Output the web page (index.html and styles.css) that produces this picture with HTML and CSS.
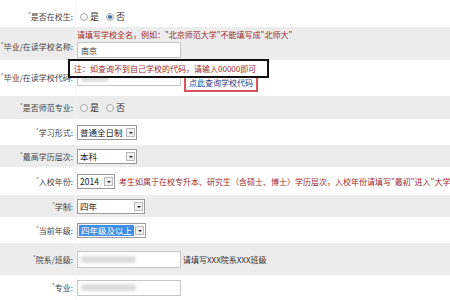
FILE: index.html
```html
<!DOCTYPE html>
<html lang="zh-CN">
<head>
    <meta charset="UTF-8">
    <title>学籍信息</title>
    <link rel="stylesheet" href="styles.css">
</head>
<body>
    <div class="form">
        <div class="row r1">
            <div class="label"><i>*</i>是否在校生:</div>
            <div class="field">
                <span class="radio"></span><span class="opt">是</span>
                <span class="radio on"></span><span class="opt">否</span>
            </div>
        </div>

        <div class="row gray r2">
            <div class="label"><i>*</i>毕业/在读学校名称:</div>
            <div class="field col">
                <div class="hint">请填写学校全名，例如："北京师范大学"不能填写成"北师大"</div>
                <div class="input wide">南京</div>
            </div>
        </div>

        <div class="row r3">
            <div class="label"><i>*</i>毕业/在读学校代码:</div>
            <div class="field">
                <div class="input"><span class="blur"></span></div>
                <a class="lookup">点此查询学校代码</a>
            </div>
            <div class="note">注：如查询不到自己学校的代码，请输入00000即可</div>
        </div>

        <div class="row gray r4">
            <div class="label"><i>*</i>是否师范专业:</div>
            <div class="field">
                <span class="radio"></span><span class="opt">是</span>
                <span class="radio"></span><span class="opt">否</span>
            </div>
        </div>

        <div class="row r5">
            <div class="label"><i>*</i>学习形式:</div>
            <div class="field">
                <div class="select s-form"><span>普通全日制</span><b></b></div>
            </div>
        </div>

        <div class="row gray r6">
            <div class="label"><i>*</i>最高学历层次:</div>
            <div class="field">
                <div class="select s-level"><span>本科</span><b></b></div>
            </div>
        </div>

        <div class="row r7">
            <div class="label"><i>*</i>入校年份:</div>
            <div class="field">
                <div class="select s-year"><span>2014</span><b></b></div>
                <span class="hint nowrap">考生如属于在校专升本、研究生（含硕士、博士）学历层次，入校年份请填写"最初"进入"大学"时的年份</span>
            </div>
        </div>

        <div class="row gray r8">
            <div class="label"><i>*</i>学制:</div>
            <div class="field">
                <div class="select s-len"><span>四年</span><b></b></div>
            </div>
        </div>

        <div class="row r9">
            <div class="label"><i>*</i>当前年级:</div>
            <div class="field">
                <div class="select s-grade"><span class="picked">四年级及以上</span><b></b></div>
            </div>
        </div>

        <div class="row gray r10">
            <div class="label"><i>*</i>院系/班级:</div>
            <div class="field">
                <div class="input tall"><span class="blur long"></span></div>
                <span class="tip">请填写XXX院系XXX班级</span>
            </div>
        </div>

        <div class="row r11">
            <div class="label"><i>*</i>专业:</div>
            <div class="field">
                <div class="input"><span class="blur long"></span></div>
            </div>
        </div>
    </div>
</body>
</html>
```

FILE: styles.css
```css
body {
    margin: 0;
    background: #fff;
    font-family: "Noto Sans CJK SC", "Liberation Sans", sans-serif;
    font-size: 8px;
    color: #333;
    overflow: hidden;
}

.form {
    width: 450px;
    overflow: hidden;
}

.row {
    display: flex;
    align-items: center;
    position: relative;
    background: #fff;
}

.row.gray {
    background: #ececec;
}

.r1 { height: 27px; }
.r2 { height: 33px; }
.r3 { height: 36px; }
.r4 { height: 23px; }
.r5 { height: 26px; }
.r6 { height: 22px; }
.r7 { height: 28px; }
.r8 { height: 22px; }
.r9 { height: 26px; }
.r10 { height: 32px; }
.r11 { height: 25px; }

.label {
    flex-shrink: 0;
    width: 73px;
    padding-right: 2px;
    text-align: right;
    white-space: nowrap;
    align-self: stretch;
    display: flex;
    align-items: center;
    justify-content: flex-end;
    border-right: 1px solid #f4f4f4;
    color: #444;
}

.r1 .label { padding-top: 6px; }
.r2 .label { padding-top: 5px; }
.r3 .label { padding-bottom: 2px; }

.label i {
    font-style: normal;
    font-size: 6px;
    color: #777;
    position: relative;
    top: -2px;
}

.field {
    display: flex;
    align-items: center;
    padding-left: 1px;
    white-space: nowrap;
    min-width: 0;
}

.r1 .field { padding-top: 6px; }

.field.col {
    flex-direction: column;
    align-items: flex-start;
    gap: 2px;
    padding-top: 0;
}

.hint {
    color: #a02a2a;
}

.nowrap {
    margin-left: 4px;
}

.radio {
    width: 6px;
    height: 6px;
    border: 1px solid #aaa;
    border-radius: 50%;
    background: #f4f4f4;
    margin: 0 2px 0 3px;
    position: relative;
}

.radio.on::after {
    content: "";
    position: absolute;
    left: 1px;
    top: 1px;
    width: 4px;
    height: 4px;
    border-radius: 50%;
    background: #3a6fb0;
}

.opt {
    margin-right: 4px;
    font-size: 9px;
    color: #333;
}

.input {
    width: 99px;
    height: 14px;
    border: 1px solid #c6c6c6;
    background: #fff;
    display: flex;
    align-items: center;
    padding-left: 3px;
    box-sizing: content-box;
    flex-shrink: 0;
}

.input.wide {
    width: 99px;
    color: #333;
}

.input.tall {
    height: 15px;
}

.blur {
    display: block;
    width: 28px;
    height: 7px;
    background: #dcdcdc;
    border-radius: 4px;
    filter: blur(1.5px);
}

.blur.long {
    width: 55px;
}

.lookup {
    margin-left: 3px;
    margin-top: 4px;
    padding: 6px 3px 2px 3px;
    border: 2px solid #d9545b;
    border-top-color: #e8a0a4;
    color: #2b3a8c;
}

.note {
    position: absolute;
    left: 68px;
    top: -1px;
    width: 193px;
    height: 15px;
    border: 2px solid #111;
    background: #fff;
    color: #a02a2a;
    padding-left: 4px;
    line-height: 15px;
    white-space: nowrap;
}

.select {
    display: flex;
    align-items: center;
    flex-shrink: 0;
    height: 13px;
    border: 1px solid #9a9a9a;
    background: #fff;
    padding-left: 2px;
    justify-content: space-between;
    font-size: 8.5px;
    color: #222;
}

.select b {
    width: 9px;
    height: 9px;
    margin: 0 1px;
    border: 1px solid #bbb;
    background: #f0f0f0;
    position: relative;
    box-sizing: border-box;
}

.select b::after {
    content: "";
    position: absolute;
    left: 2px;
    top: 3px;
    border-left: 2px solid transparent;
    border-right: 2px solid transparent;
    border-top: 2px solid #222;
}

.s-form { width: 56px; }
.s-level { width: 56px; }
.s-year { width: 34px; }
.s-len { width: 64px; }
.s-grade { width: 66px; padding-left: 1px; }

.picked {
    background: #3d8ee6;
    color: #fff;
    padding: 0 2px;
    line-height: 11px;
}

.tip {
    margin-left: 2px;
    color: #333;
}
```
